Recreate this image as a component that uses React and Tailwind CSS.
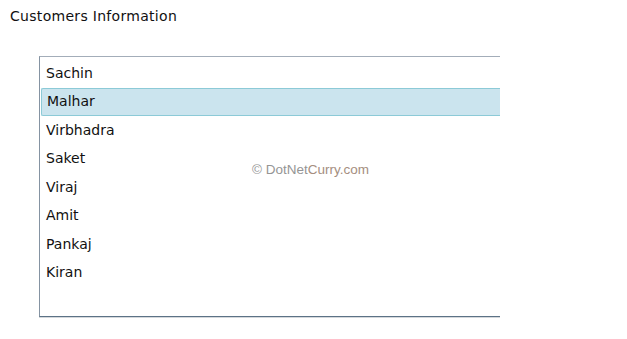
import React from "react";

const names = ["Sachin", "Malhar", "Virbhadra", "Saket", "Viraj", "Amit", "Pankaj", "Kiran"];

export default function App() {
  return (
    <div
      className="relative w-[627px] h-[339px] bg-white text-[#111] overflow-hidden"
      style={{ fontFamily: '"DejaVu Sans", Verdana, sans-serif' }}
    >
      <div className="pl-[10px] pt-[6px] text-[14px] leading-[20px] tracking-[0.3px]">Customers Information</div>
      <div className="ml-[39px] mt-[30px] w-[461px] h-[261px] border-l border-t border-b border-t-[#a3adb9] border-b-[#5c7286] border-l-[#8593a2] shadow-[0_1px_0_#d4d8dc] pt-[2px] pl-[1px]">
        {names.map((n, i) => (
          <div
            key={n}
            className={
              "h-[28.5px] flex items-center pl-[5px] text-[14px] " +
              (i === 1
                ? "bg-[#cbe4ee] border-l border-t border-b border-[#8ccad7] rounded-l-[2px] pl-[4px]"
                : "")
            }
          >
            {n}
          </div>
        ))}
      </div>
      <div
        className="absolute left-[252px] top-[161px] text-[13.5px] leading-[18px] text-[#959595]"
        style={{ fontFamily: '"Liberation Sans", Arial, sans-serif' }}
      >
        © DotNet<span className="text-[#a58e80]">Curry.com</span>
      </div>
    </div>
  );
}
